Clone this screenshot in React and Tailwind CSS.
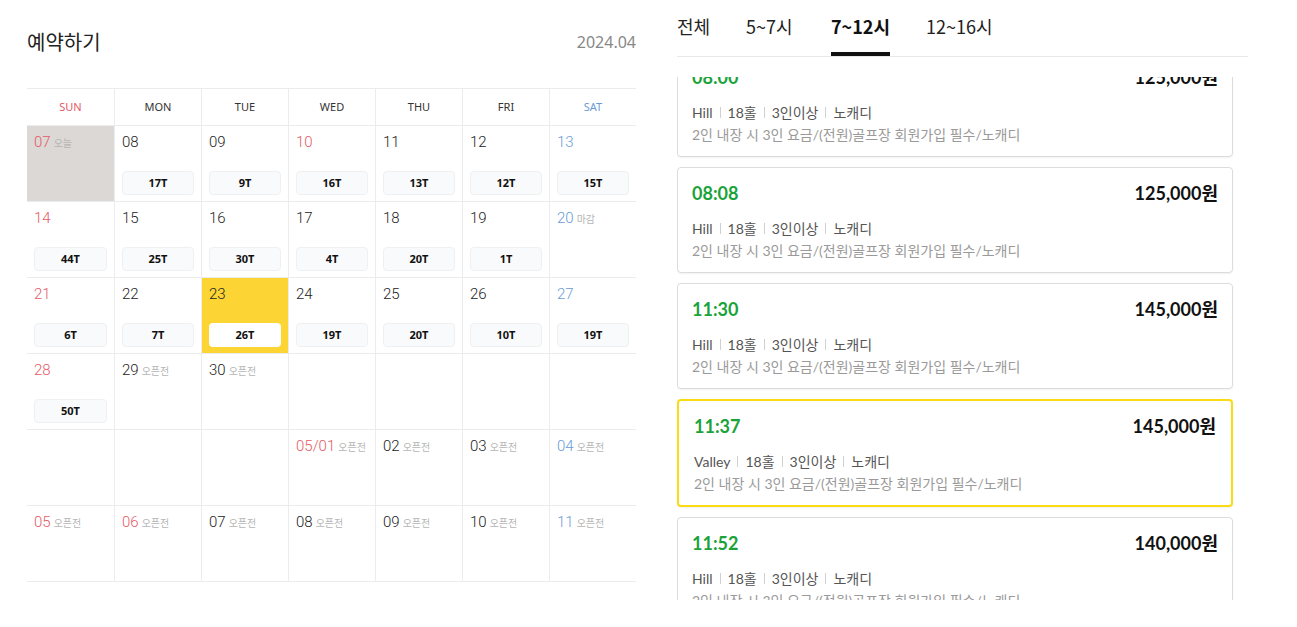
import React from "react";

const RED = "text-[#e55a66]";
const BLUE = "text-[#6b9bd6]";

const rows = [
  [
    { d: "07", c: "r", tag: "오늘", today: true },
    { d: "08", t: "17T" },
    { d: "09", t: "9T" },
    { d: "10", c: "r", t: "16T" },
    { d: "11", t: "13T" },
    { d: "12", t: "12T" },
    { d: "13", c: "b", t: "15T" },
  ],
  [
    { d: "14", c: "r", t: "44T" },
    { d: "15", t: "25T" },
    { d: "16", t: "30T" },
    { d: "17", t: "4T" },
    { d: "18", t: "20T" },
    { d: "19", t: "1T" },
    { d: "20", c: "b", tag: "마감" },
  ],
  [
    { d: "21", c: "r", t: "6T" },
    { d: "22", t: "7T" },
    { d: "23", t: "26T", sel: true },
    { d: "24", t: "19T" },
    { d: "25", t: "20T" },
    { d: "26", t: "10T" },
    { d: "27", c: "b", t: "19T" },
  ],
  [
    { d: "28", c: "r", t: "50T" },
    { d: "29", tag: "오픈전" },
    { d: "30", tag: "오픈전" },
    {},
    {},
    {},
    {},
  ],
  [
    {},
    {},
    {},
    { d: "05/01", c: "r", tag: "오픈전" },
    { d: "02", tag: "오픈전" },
    { d: "03", tag: "오픈전" },
    { d: "04", c: "b", tag: "오픈전" },
  ],
  [
    { d: "05", c: "r", tag: "오픈전" },
    { d: "06", c: "r", tag: "오픈전" },
    { d: "07", tag: "오픈전" },
    { d: "08", tag: "오픈전" },
    { d: "09", tag: "오픈전" },
    { d: "10", tag: "오픈전" },
    { d: "11", c: "b", tag: "오픈전" },
  ],
];

const days = ["SUN", "MON", "TUE", "WED", "THU", "FRI", "SAT"];

function Cell({ cell, col }) {
  const bg = cell.today ? "bg-[#dcd8d5]" : cell.sel ? "bg-[#fcd535]" : "bg-white";
  const color = cell.c === "r" ? RED : cell.c === "b" ? BLUE : "text-[#222]";
  return (
    <div
      className={`h-[75px] flex flex-col justify-between px-[7px] pt-[6px] pb-[6px] ${bg} ${
        col > 0 ? "border-l border-[#ececec]" : ""
      }`}
    >
      <div className="flex items-baseline gap-[3px] h-[20px]">
        {cell.d && (
          <span className={`text-[15px] leading-[20px] font-light ${color}`} style={{ fontFamily: "Roboto, 'Noto Sans CJK KR', sans-serif" }}>
            {cell.d}
          </span>
        )}
        {cell.tag && (
          <span className="text-[10px] leading-[14px] text-[#b5b5b5]" style={{ fontFamily: "'Noto Sans CJK KR', sans-serif" }}>
            {cell.tag}
          </span>
        )}
      </div>
      {cell.t ? (
        <div
          className={`h-[24px] rounded-[4px] flex items-center justify-center text-[11px] font-bold text-[#111] ${
            cell.sel ? "bg-white" : "bg-[#f9fafb] border border-[#eef0f2]"
          }`}
          style={{ fontFamily: "'Noto Sans', 'Noto Sans CJK KR', sans-serif" }}
        >
          {cell.t}
        </div>
      ) : null}
    </div>
  );
}

function Calendar() {
  return (
    <div className="w-[609px]">
      <div className="grid grid-cols-7 border-t border-b border-[#ececec] h-[38px]">
        {days.map((d, i) => (
          <div
            key={d}
            className={`flex items-center justify-center text-[11px] ${
              i === 0 ? "text-[#e55a66]" : i === 6 ? "text-[#6b9bd6]" : "text-[#333]"
            } ${i > 0 ? "border-l border-[#ececec]" : ""}`}
            style={{ fontFamily: "'Noto Sans', sans-serif" }}
          >
            {d}
          </div>
        ))}
      </div>
      {rows.map((r, ri) => (
        <div key={ri} className="grid grid-cols-7 border-b border-[#ececec]">
          {r.map((c, ci) => (
            <Cell key={ci} cell={c} col={ci} />
          ))}
        </div>
      ))}
    </div>
  );
}

const cards = [
  { time: "08:00", price: "125,000원", course: "Hill" },
  { time: "08:08", price: "125,000원", course: "Hill" },
  { time: "11:30", price: "145,000원", course: "Hill" },
  { time: "11:37", price: "145,000원", course: "Valley", sel: true },
  { time: "11:52", price: "140,000원", course: "Hill" },
];

function Sep() {
  return <span className="inline-block w-px h-[11px] bg-[#d0d0d0] mx-[7px]" />;
}

function Card({ c }) {
  return (
    <div
      className={`w-[556px] rounded-[4px] bg-white shadow-[0_1px_2px_rgba(0,0,0,0.06)] ${
        c.sel ? "border-2 border-[#fadb14] px-[15px] pt-[15px] pb-[11px]" : "border border-[#dcdcdc] px-[14px] pt-[15px] pb-[11px]"
      }`}
    >
      <div className="flex items-center justify-between h-[20px]">
        <span className="text-[18px] font-bold text-[#1aa33a]">{c.time}</span>
        <span className="text-[18px] font-bold text-[#111]">{c.price}</span>
      </div>
      <div className="mt-[14px] flex items-center h-[22px] text-[14px] text-[#555]">
        <span>{c.course}</span>
        <Sep />
        <span>18홀</span>
        <Sep />
        <span>3인이상</span>
        <Sep />
        <span>노캐디</span>
      </div>
      <div className="h-[22px] flex items-center text-[14px] text-[#9a9a9a]">
        2인 내장 시 3인 요금/(전원)골프장 회원가입 필수/노캐디
      </div>
    </div>
  );
}

function Tab({ label, active, w }) {
  return (
    <div className={`h-full flex items-center pb-[4px] ${w}`}>
      <span className={`relative h-full flex items-center ${active ? "font-bold text-[#111]" : ""}`}>
        {label}
        {active && <span className="absolute left-0 right-0 bottom-[-4px] h-[4px] bg-[#111]" />}
      </span>
    </div>
  );
}

export default function App() {
  return (
    <div className="flex w-[1297px] h-[627px] bg-white overflow-hidden" style={{ fontFamily: "Lato, 'Noto Sans CJK KR', sans-serif" }}>
      <div className="pl-[27px] pt-[28px]">
        <div className="flex items-center justify-between w-[609px] h-[28px]">
          <h1 className="text-[20px] text-[#222]" style={{ fontFamily: "'Noto Sans CJK KR', sans-serif" }}>
            예약하기
          </h1>
          <span className="text-[16px] text-[#888]" style={{ fontFamily: "'Noto Sans', sans-serif" }}>
            2024.04
          </span>
        </div>
        <div className="mt-[32px]">
          <Calendar />
        </div>
      </div>
      <div className="ml-[41px] w-[571px] flex flex-col">
        <div className="flex items-end h-[57px] border-b border-[#e8e8e8] text-[18px] text-[#222]" style={{ fontFamily: "'Noto Sans CJK KR', sans-serif" }}>
          <Tab label="전체" w="w-[69px]" />
          <Tab label="5~7시" w="w-[85px]" />
          <Tab label="7~12시" w="w-[95px]" active />
          <Tab label="12~16시" w="" />
        </div>
        <div className="mt-[20px] h-[523px] overflow-hidden">
          <div className="-mt-[26px] flex flex-col gap-[10px]">
            {cards.map((c, i) => (
              <Card key={i} c={c} />
            ))}
          </div>
        </div>
      </div>
    </div>
  );
}
